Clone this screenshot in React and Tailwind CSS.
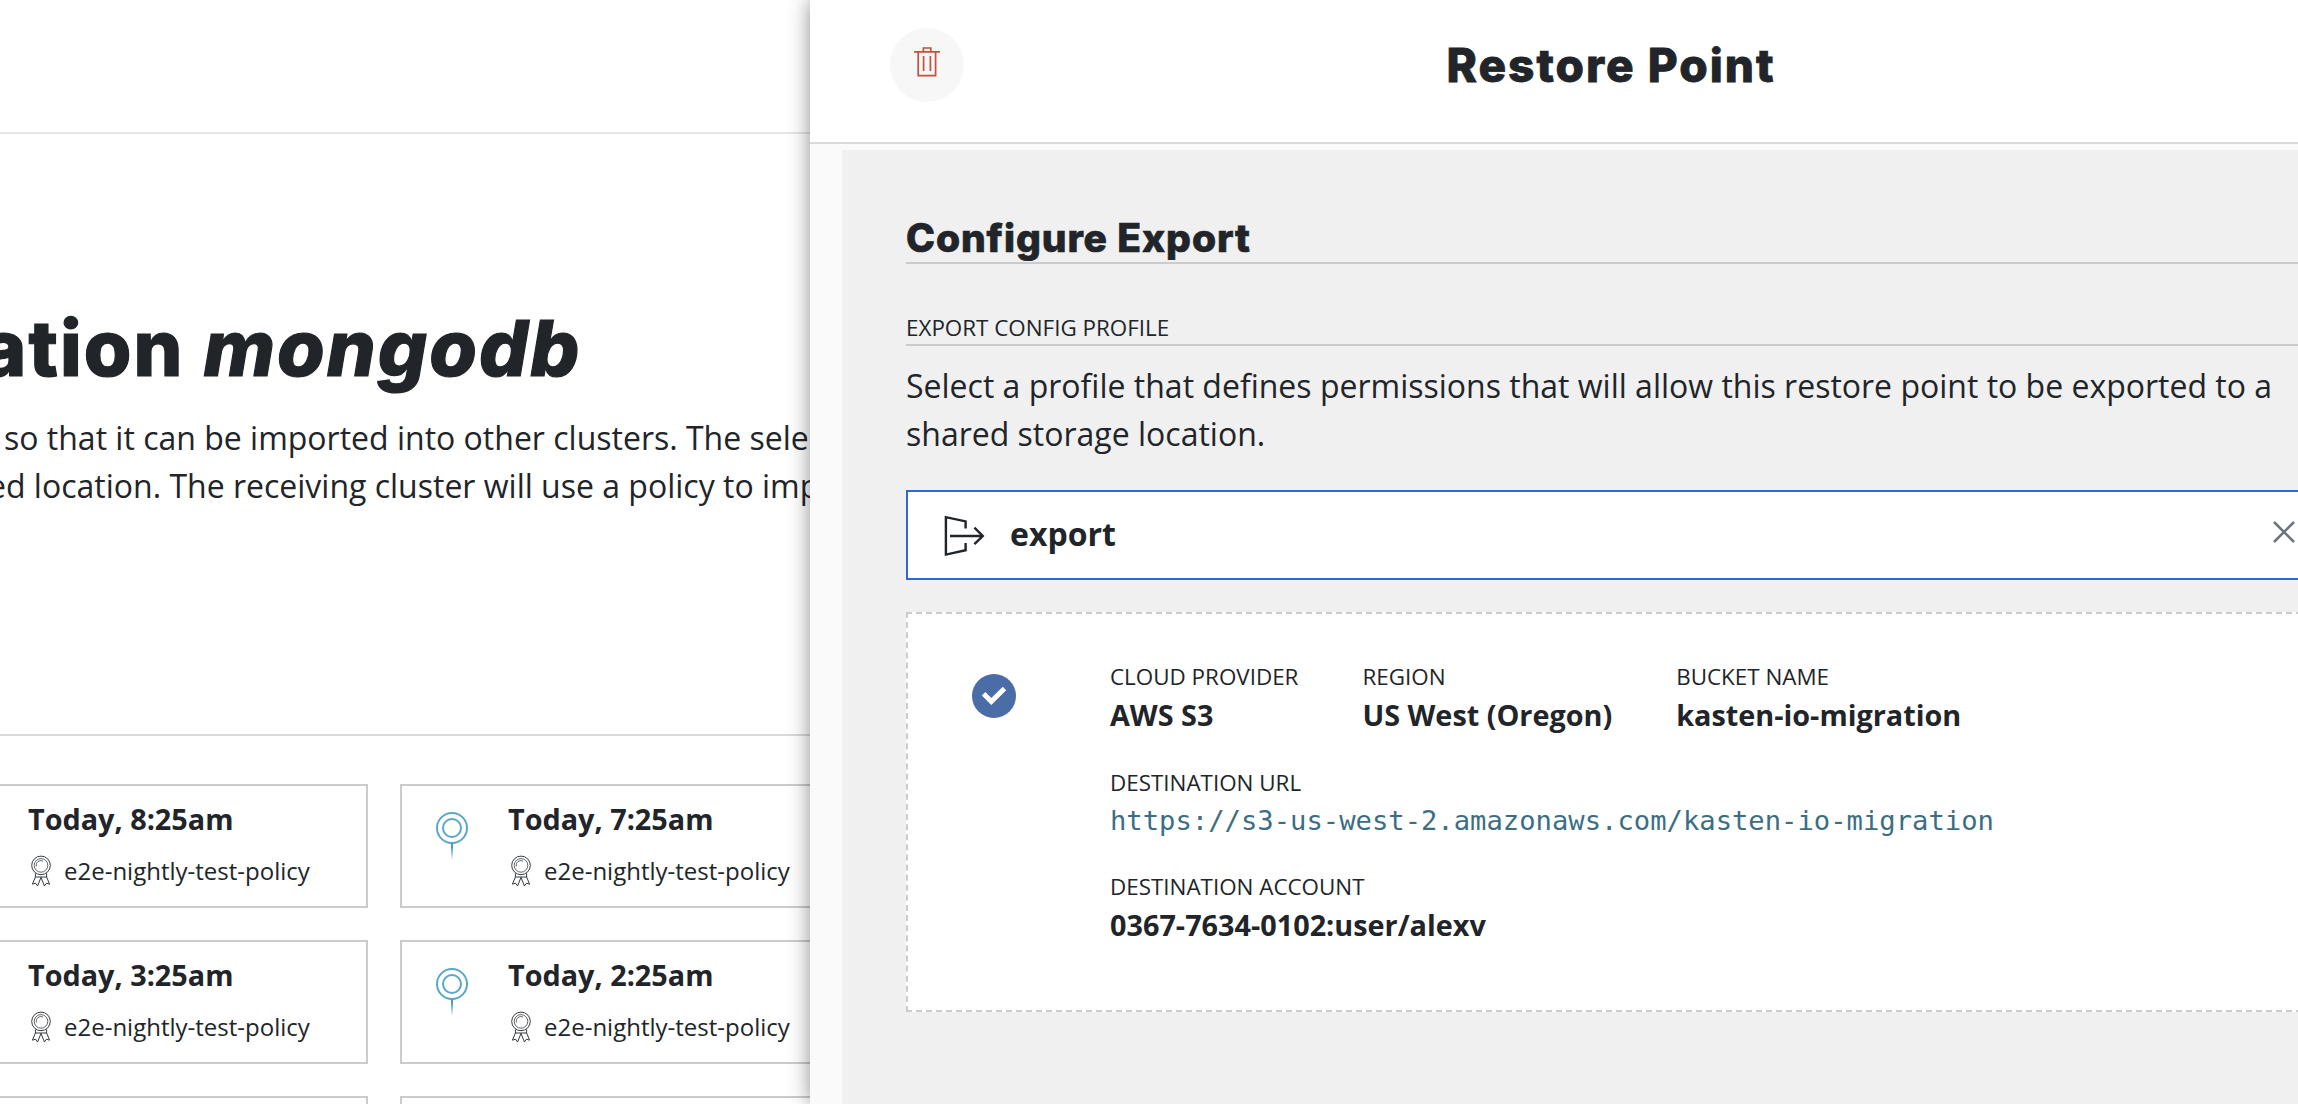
import React from "react";

const OPEN = "font-['Open_Sans','Noto_Sans',sans-serif]";

function TrashIcon() {
  return (
    <svg width="28" height="32" viewBox="0 0 28 32" fill="none" stroke="#c0533c" strokeWidth="1.7">
      <path d="M1 5.8H27M5.2 6V29.6H22.6V6M10.4 5.8V2H17.8V5.8M10.6 10V25M17.4 10V25" />
    </svg>
  );
}

function ExportIcon() {
  return (
    <svg className="overflow-visible" width="42" height="42" viewBox="0 0 42 42" fill="none" stroke="#212529" strokeWidth="2.4">
      <path d="M23.6 14.6V7.4L3.9 3.2V40.6L23.6 36.2V29M8 22H41M32.4 13.6L40.8 22L32.4 30.2" />
    </svg>
  );
}

function CheckIcon() {
  return (
    <svg width="44" height="44" viewBox="0 0 44 44">
      <circle cx="22" cy="22" r="22" fill="#4a6da7" />
      <path d="M11.6 19.8L19.3 27.5L32.5 14.4" fill="none" stroke="#fff" strokeWidth="5" />
    </svg>
  );
}

function PinIcon() {
  return (
    <svg width="32" height="48" viewBox="0 0 32 48" fill="none" stroke="#5ba7c7" strokeWidth="2">
      <defs>
        <linearGradient id="pin-fade" x1="0" y1="32" x2="0" y2="48" gradientUnits="userSpaceOnUse">
          <stop offset="0.2" stopColor="#4a9dbf" />
          <stop offset="1" stopColor="#4a9dbf" stopOpacity="0" />
        </linearGradient>
      </defs>
      <circle cx="16" cy="16" r="15" />
      <circle cx="16" cy="16" r="9" />
      <rect x="15" y="31" width="2" height="17" fill="url(#pin-fade)" stroke="none" />
    </svg>
  );
}

function RibbonIcon() {
  return (
    <svg width="20" height="32" viewBox="0 0 20 32" fill="none" stroke="#212529" strokeWidth="0.9">
      <circle cx="10" cy="10.4" r="9.3" />
      <circle cx="10" cy="10.4" r="6.8" strokeWidth="0.7" />
      <path d="M5.3 11.5A4.8 4.8 0 0 1 12 6" strokeWidth="0.7" />
      <path d="M4.4 18.4V22H15.6V18.4M4.4 22L1.4 29.2L4.6 28.2L6.6 31L10 22.4L13.4 31L15.4 28.2L18.6 29.2L15.6 22" />
    </svg>
  );
}

function RestoreCard({ time }) {
  return (
    <div className="flex h-[124px] w-[448px] shrink-0 border-2 border-[#cbcbcb] bg-white pl-[34px] pt-[10px]">
      {time && (
        <>
          <div className="w-[72px] shrink-0 pt-4">
            <PinIcon />
          </div>
          <div>
            <div className="text-[28.8px] font-bold leading-[46px]">{time}</div>
            <div className="mt-[6px] flex h-[46px] items-center gap-[13px] pl-[3px]">
              <RibbonIcon />
              <span className="text-[24px] leading-[36px]">e2e-nightly-test-policy</span>
            </div>
          </div>
        </>
      )}
    </div>
  );
}

function Field({ label, children }) {
  return (
    <div>
      <div className="text-[22.4px] leading-[34px]">{label}</div>
      <div className="text-[28.8px] font-bold leading-[42px]">{children}</div>
    </div>
  );
}

export default function App() {
  return (
    <div className={`flex h-[1104px] w-[2298px] overflow-hidden bg-white text-[#212529] ${OPEN}`}>
      <main className="h-full w-[810px] shrink-0 overflow-hidden">
        <header className="h-[134px] border-b-2 border-[#e5e5e5]" />
        <section className="h-[602px] border-b-2 border-[#d9d9d9] pt-[158px]">
          <h1 className="-ml-[19px] h-[112px] whitespace-nowrap font-['Inter',sans-serif] text-[77px] font-extrabold leading-[112px] tracking-[2.1px] [-webkit-text-stroke:1.2px_#212529]">
            ation <em>mongodb</em>
          </h1>
          <p className="ml-[4px] mt-[10px] whitespace-nowrap text-[32px] leading-[48px]">
            so that it can be imported into other clusters. The sele
          </p>
          <p className="-ml-[12px] whitespace-nowrap text-[32px] leading-[48px]">
            ed location. The receiving cluster will use a policy to imp
          </p>
        </section>
        <section className="-ml-[80px] mt-[48px] grid w-[928px] grid-cols-2 gap-8">
          <RestoreCard time="Today, 8:25am" />
          <RestoreCard time="Today, 7:25am" />
          <RestoreCard time="Today, 3:25am" />
          <RestoreCard time="Today, 2:25am" />
          <RestoreCard />
          <RestoreCard />
        </section>
      </main>

      <aside className="relative h-full w-[1602px] shrink-0 bg-[#fafafa] shadow-[0_0_20px_rgba(0,0,0,0.45)]">
        <header className="flex h-[144px] border-b-2 border-[#d9d9d9] bg-white px-20 pt-[28px]">
          <button className="flex size-[74px] shrink-0 items-center justify-center rounded-full bg-[#f7f7f7] pb-[6px]">
            <TrashIcon />
          </button>
          <h2 className="flex-1 pr-[74px] text-center font-['Inter',sans-serif] text-[46px] font-extrabold leading-[74px] tracking-[2px] [-webkit-text-stroke:0.8px_#212529]">
            Restore Point
          </h2>
        </header>
        <div className="ml-8 mt-[6px] h-[954px] bg-[#f0f0f0] pl-16 pt-[60px]">
          <h3 className="h-[54px] border-b-2 border-[#cbcbcb] font-['Inter',sans-serif] text-[39px] font-extrabold leading-[56px] tracking-[0.9px] [-webkit-text-stroke:0.7px_#212529]">
            Configure Export
          </h3>
          <div className="mt-[46px] h-[36px] border-b-2 border-[#cbcbcb] text-[22.4px] leading-[36px]">
            EXPORT CONFIG PROFILE
          </div>
          <p className="mt-[16px] w-[1400px] text-[32px] leading-[48px]">
            Select a profile that defines permissions that will allow this restore point to be exported to a
            shared storage location.
          </p>
          <div className="mt-8 flex h-[90px] items-center border-2 border-[#2f69d0] bg-white pl-[34px]">
            <ExportIcon />
            <span className="-mt-[2px] ml-[26px] w-[1263px] text-[32px] font-bold leading-[48px]">export</span>
            <svg className="-mt-[6px]" width="22" height="22" viewBox="0 0 22 22" fill="none" stroke="#6c757d" strokeWidth="2.5">
              <path d="M1 1L21 21M21 1L1 21" />
            </svg>
          </div>
          <div className="mt-8 flex h-[400px] border-2 border-dashed border-[#cbcbcb] bg-white pl-16 pt-[46px]">
            <div className="w-[138px] shrink-0 pt-[14px]">
              <CheckIcon />
            </div>
            <div className="flex flex-col gap-7">
              <div className="mb-[2px] flex gap-16">
                <Field label="CLOUD PROVIDER">AWS S3</Field>
                <Field label="REGION">US West (Oregon)</Field>
                <Field label="BUCKET NAME">kasten-io-migration</Field>
              </div>
              <Field label="DESTINATION URL">
                <a className="block pb-px font-['DejaVu_Sans_Mono',monospace] text-[27.2px] font-normal leading-[41px] text-[#3b6e85]">
                  https://s3-us-west-2.amazonaws.com/kasten-io-migration
                </a>
              </Field>
              <Field label="DESTINATION ACCOUNT">0367-7634-0102:user/alexv</Field>
            </div>
          </div>
        </div>
      </aside>
    </div>
  );
}
